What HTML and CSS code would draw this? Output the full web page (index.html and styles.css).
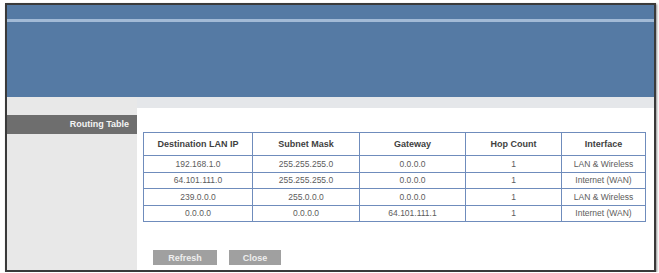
FILE: index.html
```html
<!DOCTYPE html>
<html lang="en">
<head>
  <meta charset="UTF-8">
  <title>Routing Table</title>
  <link rel="stylesheet" href="styles.css">
</head>
<body>
  <div class="window">
    <div class="header">
      <div class="header-line"></div>
    </div>
    <div class="main">
      <div class="sidebar">
        <div class="section-title">Routing Table</div>
      </div>
      <div class="content">
        <table class="routes">
          <thead>
            <tr>
              <th class="col-dest">Destination LAN IP</th>
              <th class="col-mask">Subnet Mask</th>
              <th class="col-gw">Gateway</th>
              <th class="col-hop">Hop Count</th>
              <th>Interface</th>
            </tr>
          </thead>
          <tbody>
            <tr><td>192.168.1.0</td><td>255.255.255.0</td><td>0.0.0.0</td><td>1</td><td>LAN &amp; Wireless</td></tr>
            <tr><td>64.101.111.0</td><td>255.255.255.0</td><td>0.0.0.0</td><td>1</td><td>Internet (WAN)</td></tr>
            <tr><td>239.0.0.0</td><td>255.0.0.0</td><td>0.0.0.0</td><td>1</td><td>LAN &amp; Wireless</td></tr>
            <tr><td>0.0.0.0</td><td>0.0.0.0</td><td>64.101.111.1</td><td>1</td><td>Internet (WAN)</td></tr>
          </tbody>
        </table>
        <div class="actions">
          <button class="btn btn-refresh">Refresh</button>
          <button class="btn btn-close">Close</button>
        </div>
      </div>
    </div>
  </div>
</body>
</html>
```

FILE: styles.css
```css
body {
  margin: 0;
  padding: 3px 0 0 5px;
  background: #fff;
  font-family: "Liberation Sans", Arial, sans-serif;
}
.window {
  width: 647px;
  border: 2px solid #3a3a3a;
  box-shadow: 1px 1px 2px rgba(0, 0, 0, 0.45);
  display: flex;
  flex-direction: column;
}
.header {
  height: 92px;
  background: #557aa4;
  padding-top: 14px;
  box-sizing: border-box;
}
.header-line {
  height: 3px;
  background: #a2bad6;
}
.main {
  display: flex;
  height: 173px;
  background: #e5e7ea;
}
.sidebar {
  width: 130px;
  background: #e8e8e8;
  padding-top: 18px;
}
.section-title {
  height: 19px;
  line-height: 19px;
  background: #6e6e6e;
  color: #f4f4f4;
  font-size: 9px;
  font-weight: bold;
  text-align: right;
  padding-right: 8px;
}
.content {
  flex: 1;
  background: #fff;
  margin-top: 11px;
  padding: 24px 0 0 6px;
  display: flex;
  flex-direction: column;
}
.routes {
  width: 503px;
  border-collapse: collapse;
  font-size: 8.5px;
  color: #5c5c5c;
}
.routes th,
.routes td {
  border: 1px solid #6f8cbc;
  text-align: center;
  padding: 0;
}
.routes th {
  height: 22px;
  font-size: 9px;
  font-weight: bold;
  color: #3f3f3f;
}
.routes td {
  height: 15.5px;
}
.col-dest { width: 108px; }
.col-mask { width: 106px; }
.col-gw { width: 105px; }
.col-hop { width: 95px; }
.actions {
  display: flex;
  gap: 12px;
  margin: 28px 0 0 10px;
}
.btn {
  height: 15px;
  border: none;
  background: #a0a0a0;
  color: #eeeeee;
  font-family: inherit;
  font-size: 9px;
  font-weight: bold;
  padding: 0;
}
.btn-refresh { width: 64px; }
.btn-close { width: 52px; }
```
